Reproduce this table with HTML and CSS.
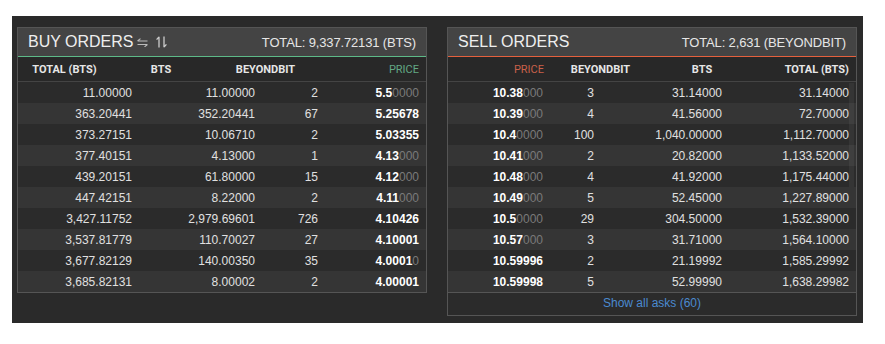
FILE: index.html
```
<!DOCTYPE html>
<html>
<head>
<meta charset="utf-8">
<link rel="stylesheet" href="styles.css">
</head>
<body>
<div class="wrap">
  <section class="panel buy">
    <header class="ph green">
      <div class="ttl">BUY ORDERS
        <svg class="ic" width="11" height="9" viewBox="0 0 11 9"><path d="M0.5 3H10.5M0.5 3L3.5 0.6M10.5 6.5H0.5M10.5 6.5L7.5 8.9" stroke="#bbb" stroke-width="1.1" fill="none"/></svg>
        <svg class="ic ic2" width="11" height="12" viewBox="0 0 11 12"><path d="M3 11.5V0.8M3 0.8L0.6 3.6M8 0.5V11.2M8 11.2L10.4 8.4" stroke="#ccc" stroke-width="1.3" fill="none"/></svg>
      </div>
      <div class="tot">TOTAL: 9,337.72131 (BTS)</div>
    </header>
    <div class="colh bh">
      <span class="c">TOTAL (BTS)</span><span class="c">BTS</span><span class="c">BEYONDBIT</span><span class="r gtxt">PRICE</span>
    </div>
    <div class="rows">
      <div class="row br"><span>11.00000</span><span>11.00000</span><span>2</span><span class="p">5.5<i>0000</i></span></div>
      <div class="row br"><span>363.20441</span><span>352.20441</span><span>67</span><span class="p">5.25678</span></div>
      <div class="row br"><span>373.27151</span><span>10.06710</span><span>2</span><span class="p">5.03355</span></div>
      <div class="row br"><span>377.40151</span><span>4.13000</span><span>1</span><span class="p">4.13<i>000</i></span></div>
      <div class="row br"><span>439.20151</span><span>61.80000</span><span>15</span><span class="p">4.12<i>000</i></span></div>
      <div class="row br"><span>447.42151</span><span>8.22000</span><span>2</span><span class="p">4.11<i>000</i></span></div>
      <div class="row br"><span>3,427.11752</span><span>2,979.69601</span><span>726</span><span class="p">4.10426</span></div>
      <div class="row br"><span>3,537.81779</span><span>110.70027</span><span>27</span><span class="p">4.10001</span></div>
      <div class="row br"><span>3,677.82129</span><span>140.00350</span><span>35</span><span class="p">4.0001<i>0</i></span></div>
      <div class="row br"><span>3,685.82131</span><span>8.00002</span><span>2</span><span class="p">4.00001</span></div>
    </div>
  </section>
  <section class="panel sell">
    <header class="ph red">
      <div class="ttl">SELL ORDERS</div>
      <div class="tot">TOTAL: 2,631 (BEYONDBIT)</div>
    </header>
    <div class="colh sh">
      <span class="r rtxt">PRICE</span><span class="c">BEYONDBIT</span><span class="c">BTS</span><span class="r">TOTAL (BTS)</span>
    </div>
    <div class="rows">
      <div class="row sr"><span class="p">10.38<i>000</i></span><span>3</span><span>31.14000</span><span>31.14000</span></div>
      <div class="row sr"><span class="p">10.39<i>000</i></span><span>4</span><span>41.56000</span><span>72.70000</span></div>
      <div class="row sr"><span class="p">10.4<i>0000</i></span><span>100</span><span>1,040.00000</span><span>1,112.70000</span></div>
      <div class="row sr"><span class="p">10.41<i>000</i></span><span>2</span><span>20.82000</span><span>1,133.52000</span></div>
      <div class="row sr"><span class="p">10.48<i>000</i></span><span>4</span><span>41.92000</span><span>1,175.44000</span></div>
      <div class="row sr"><span class="p">10.49<i>000</i></span><span>5</span><span>52.45000</span><span>1,227.89000</span></div>
      <div class="row sr"><span class="p">10.5<i>0000</i></span><span>29</span><span>304.50000</span><span>1,532.39000</span></div>
      <div class="row sr"><span class="p">10.57<i>000</i></span><span>3</span><span>31.71000</span><span>1,564.10000</span></div>
      <div class="row sr"><span class="p">10.59996</span><span>2</span><span>21.19992</span><span>1,585.29992</span></div>
      <div class="row sr"><span class="p">10.59998</span><span>5</span><span>52.99990</span><span>1,638.29982</span></div>
      <div class="thumb"></div>
    </div>
    <div class="foot"><a>Show all asks (60)</a></div>
  </section>
</div>
</body>
</html>
```
FILE: styles.css
```
* { box-sizing: border-box; }
body {
  margin: 0;
  background: #fff;
  font-family: "Liberation Sans", Arial, sans-serif;
  color: #e2e2e2;
}
.wrap {
  margin: 16px 0 0 12px;
  width: 851px;
  height: 307px;
  background: #2a2a2a;
  padding: 11px 6px 0 5px;
  display: flex;
  gap: 20px;
  align-items: flex-start;
}
.panel {
  width: 410px;
  border: 1px solid #555;
  background: #2b2b2b;
}
.ph {
  height: 29px;
  background: #444;
  display: flex;
  justify-content: space-between;
  align-items: center;
  padding: 0 10px 0 10px;
  border-bottom: 1px solid;
}
.ph.green { border-color: #5dba88; }
.ph.red { border-color: #e5603d; }
.ttl {
  font-size: 16px;
  color: #eee;
  display: flex;
  align-items: center;
  line-height: 28px;
}
.ic { margin-left: 3px; margin-top: 1px; }
.ic2 { margin-left: 8px; margin-top: 0; }
.tot {
  font-size: 13px;
  color: #e6e6e6;
  letter-spacing: -0.15px;
}
.colh {
  display: grid;
  height: 25px;
  align-items: center;
  background: #282828;
  border-bottom: 1px solid #444;
  font-family: "Liberation Sans Narrow", "Roboto", sans-serif;
  font-weight: 700;
  font-size: 11px;
  color: #e6e6e6;
  padding-right: 7px;
}
.colh .c { text-align: center; }
.colh .r { text-align: right; }
.gtxt { color: #62a784; font-weight: 400; }
.rtxt { color: #c8604a; font-weight: 400; }
.bh { grid-template-columns: 93px 100px 109px 99px; }
.sh { grid-template-columns: 96px 113px 90px 102px; }
.rows { position: relative; }
.row {
  display: grid;
  height: 21px;
  align-items: center;
  font-size: 12px;
  padding-right: 7px;
  text-align: right;
  color: #e0e0e0;
}
.row:nth-child(odd) { background: #2b2b2b; }
.row:nth-child(even) { background: #353535; }
.br { grid-template-columns: 114px 123px 63px 101px; }
.sr { grid-template-columns: 95px 51px 128px 127px; }
.p { font-weight: 700; color: #fff; }
.p i { font-style: normal; font-weight: 400; color: #7a7a7a; }
.thumb {
  position: absolute;
  right: 2px;
  top: 1px;
  width: 5px;
  height: 104px;
  background: rgba(255,255,255,0.05);
}
.foot {
  height: 23px;
  border-top: 1px solid #555;
  background: #2b2b2b;
  text-align: center;
  font-size: 12px;
  line-height: 21px;
}
.foot a { color: #4a8ad0; }
```
